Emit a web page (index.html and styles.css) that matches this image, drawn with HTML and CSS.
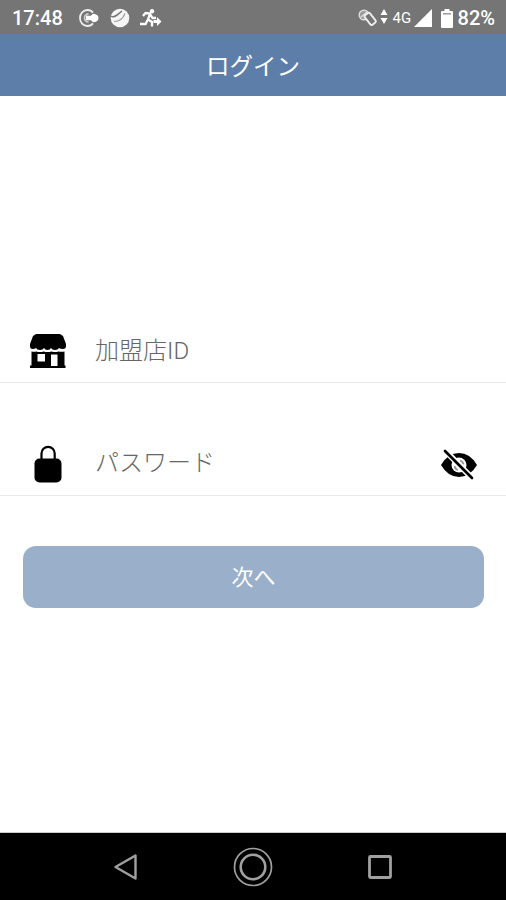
FILE: index.html
```html
<!DOCTYPE html>
<html lang="ja">
<head>
    <meta charset="UTF-8">
    <meta name="viewport" content="width=device-width, initial-scale=1.0">
    <title>ログイン</title>
    <link rel="stylesheet" href="styles.css">
</head>
<body>
    <div class="status-bar">
        <span class="time">17:48</span>
        <svg class="icon-key" width="20" height="18" viewBox="0 0 20 18">
            <path d="M14 3.600Q12 1 8.500 1C4 1 1 4.500 1 9s3 8 7.500 8q3.500 0 5.500-2.600" fill="none" stroke="#eee" stroke-width="1.800"/>
            <path d="M9.500 5a4 4 0 0 0 0 8" fill="none" stroke="#ccc" stroke-width="1.800"/>
            <path d="M7 6.700h5q1-2 3-2 4.500 1 4.500 4.300T15 13.300q-2 0-3-2H7z" fill="#fff"/>
        </svg>
        <svg class="icon-ball" width="20" height="20" viewBox="0 0 20 20">
            <circle cx="10" cy="10" r="9.300" fill="#f5f5f5"/>
            <path d="M1 8Q3 10 7 7l5-4" fill="none" stroke="#777" stroke-width="1.600"/>
            <path d="M4 13.500q8 0 11-8" fill="none" stroke="#999" stroke-width="1.200"/>
        </svg>
        <svg class="icon-run" width="22" height="18" viewBox="0 0 22 18">
            <circle cx="12" cy="2.200" r="2.200" fill="#fff"/>
            <path d="M3 7l2.500-3 4.500.5-2 6 4 2.500v4.500M8 10.500L5.500 15H0M10 5l2.500 4H16" fill="none" stroke="#fff" stroke-width="2.300"/>
            <path d="M13.500 11H17V8l4.500 4.500L17 17v-3h-3.500z" fill="#fff"/>
        </svg>
        <div class="status-right">
            <svg class="icon-phone" width="20" height="18" viewBox="0 0 20 18">
                <circle cx="6" cy="6" r="4.800" fill="#999" stroke="#ddd" stroke-width="1.400"/>
                <path d="M3 8l6-5" stroke="#ddd" stroke-width="1.500"/>
                <rect x="9" y="4" width="6.500" height="12" rx="1.500" fill="#757575" stroke="#eee" stroke-width="1.900" transform="rotate(-38 12 10)"/>
            </svg>
            <svg class="icon-data" width="8" height="16" viewBox="0 0 8 16">
                <path d="M4 0l3.500 6h-7zM4 15L.5 9h7z" fill="#fff"/>
            </svg>
            <span class="network">4G</span>
            <svg class="icon-signal" width="18" height="18" viewBox="0 0 18 18">
                <path d="M18 0v18H0z" fill="#fff"/>
            </svg>
            <svg class="icon-battery" width="12" height="19" viewBox="0 0 12 19">
                <path d="M3.500 0h5v2H11a1 1 0 0 1 1 1v15a1 1 0 0 1-1 1H1a1 1 0 0 1-1-1V3a1 1 0 0 1 1-1h2.500z" fill="#fff"/>
                <path d="M2 4.800h8" stroke="#999" stroke-width="1.500"/>
            </svg>
            <span class="percent">82%</span>
        </div>
    </div>

    <header>
        <h1>ログイン</h1>
    </header>

    <main>
        <label class="field">
            <svg class="field-icon" width="38" height="36" viewBox="0 0 38 36">
                <path d="M7 1h24l3 2 3 8v2q0 3-3 3-3 0-4-1-1 2-4 2t-4-2q-1 2-3.500 2T15 15q-1 2-4 2t-4-2q-1 1-3.500 1T1 13v-2l3-8z" fill="#000"/>
                <path fill-rule="evenodd" d="M2.500 18.500q3 .5 5 0 3 1 7 0 4 1 8 0 4 1 7 0 3 .5 6 0V32.500H36.500V35H1v-2.500h1.500zM8.500 21v7.500h7.500V21zM22 21.500V33h6.500V21.500z" fill="#000"/>
            </svg>
            <span class="field-text">加盟店ID</span>
        </label>
        <label class="field field-password">
            <svg class="field-icon" width="38" height="38" viewBox="0 0 38 38">
                <path d="M12.500 15V8.500a6.600 6.600 0 0 1 13.200 0V15" fill="none" stroke="#000" stroke-width="2.200"/>
                <rect x="5.500" y="13.500" width="27" height="24" rx="5" fill="#000"/>
            </svg>
            <span class="field-text">パスワード</span>
            <svg class="eye-icon" width="38" height="32" viewBox="0 0 38 32">
                <path d="M1 16Q8 4 19 4t18 12Q30 28 19 28T1 16z" fill="#000"/>
                <circle cx="19" cy="16" r="7.500" fill="#fff"/>
                <path d="M20 11.500a5 5 0 0 1 3.500 4M14.500 17a5 5 0 0 0 3.500 4" fill="none" stroke="#999" stroke-width="1.800"/>
                <path d="M3.500 0L34 31" stroke="#fff" stroke-width="6"/>
                <path d="M5 2L32 29" stroke="#000" stroke-width="2.600" stroke-linecap="round"/>
            </svg>
        </label>
        <button class="btn" type="button">次へ</button>
    </main>

    <nav class="nav-bar">
        <svg width="40" height="40" viewBox="0 0 40 40">
            <path d="M9.500 20L29.500 8.500v23z" fill="none" stroke="#a0a0a0" stroke-width="2.400" stroke-linejoin="round"/>
        </svg>
        <svg width="40" height="40" viewBox="0 0 40 40">
            <circle cx="20" cy="20" r="18.500" fill="none" stroke="#a0a0a0" stroke-width="1.700"/>
            <circle cx="20" cy="20" r="12.300" fill="none" stroke="#a0a0a0" stroke-width="2.600"/>
        </svg>
        <svg width="40" height="40" viewBox="0 0 40 40">
            <rect x="9.500" y="9.500" width="21" height="21" rx="1" fill="none" stroke="#a0a0a0" stroke-width="2.800"/>
        </svg>
    </nav>
</body>
</html>
```
FILE: styles.css
```css
* {
    box-sizing: border-box;
}

body {
    margin: 0;
    height: 100vh;
    display: flex;
    flex-direction: column;
    background-color: #fff;
    font-family: Roboto, "Noto Sans CJK JP", sans-serif;
}

svg {
    display: block;
    flex-shrink: 0;
}

.status-bar {
    height: 34px;
    flex-shrink: 0;
    display: flex;
    align-items: center;
    padding: 2px 11px 0 12px;
    background-color: #757575;
    color: #fff;
    font-size: 20px;
    font-weight: 500;
}

.time {
    width: 67px;
}

.icon-ball {
    margin-left: 11px;
}

.icon-run {
    margin-left: 10px;
}

.status-right {
    display: flex;
    align-items: center;
    margin-left: auto;
}

.icon-data {
    margin: 0 5px 3px 2px;
}

.network {
    width: 21px;
    font-size: 15px;
    font-weight: 400;
}

.icon-battery {
    margin: 0 5px 0 9px;
}

header {
    height: 62px;
    flex-shrink: 0;
    display: flex;
    align-items: center;
    justify-content: center;
    background-color: #5e7eaa;
    color: #fff;
}

h1 {
    margin: 0;
    font-size: 23.5px;
    font-weight: 400;
}

main {
    flex: 1;
    padding-top: 174px;
}

.field {
    height: 113px;
    display: flex;
    align-items: flex-end;
    padding: 0 28px 13px 29px;
    border-bottom: 1px solid #e9e9e9;
    font-size: 24px;
    font-weight: 300;
    line-height: 36px;
    color: #666;
}

.field-text {
    flex: 1;
    margin-left: 28px;
}

.field-password {
    padding-bottom: 12px;
}

.field-password .field-text {
    margin-bottom: 2px;
}

.eye-icon {
    margin-bottom: 2px;
}

.btn {
    display: block;
    width: 461px;
    height: 62px;
    margin: 50px 0 0 23px;
    padding: 0 0 4px;
    border: none;
    border-radius: 13px;
    background-color: #9aafc9;
    color: #fff;
    font-family: inherit;
    font-size: 22px;
}

.nav-bar {
    height: 67px;
    flex-shrink: 0;
    display: flex;
    align-items: center;
    justify-content: center;
    gap: 87px;
    background-color: #000;
    box-shadow: 0 -1px 0 #ccc;
}
```
